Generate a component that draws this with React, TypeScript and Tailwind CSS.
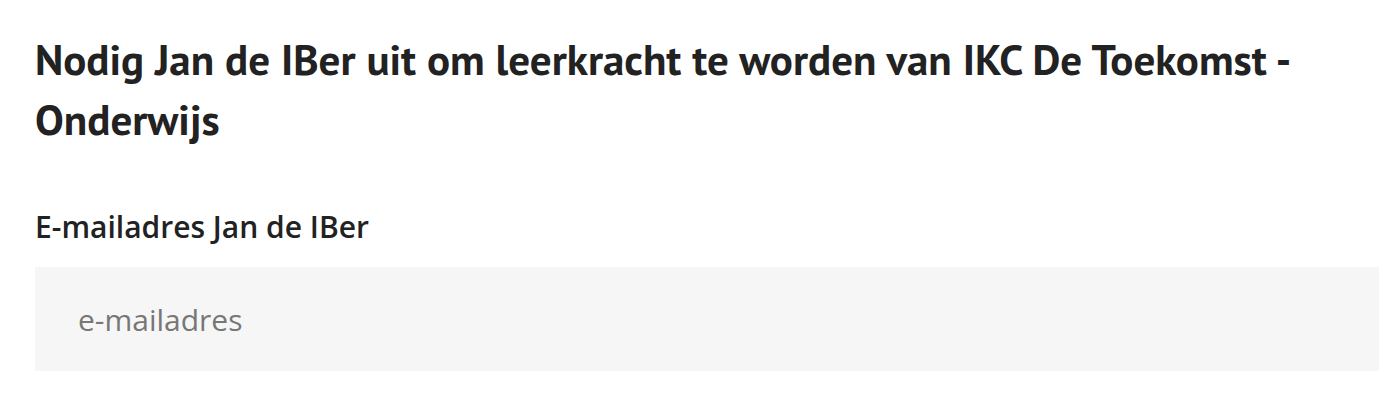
export default function App() {
    return (
        <div className="bg-white min-h-[412px] pl-[35px] pr-[21px] pt-[29px]">
            {/* Title */}
            <h1 className="text-[43px] leading-[60px] font-bold text-[#222] font-['PT_Sans','DejaVu_Sans_Condensed',sans-serif]">
                Nodig Jan de IBer uit om leerkracht te worden van IKC De Toekomst - Onderwijs
            </h1>

            {/* Email field */}
            <div className="mt-[58px]">
                <label className="block text-[30px] leading-[40px] font-semibold text-[#222] font-['Open_Sans',sans-serif]">
                    E-mailadres Jan de IBer
                </label>
                <input
                    type="email"
                    placeholder="e-mailadres"
                    className="mt-[20px] block w-full h-[104px] bg-[#f6f6f6] px-[43px] text-[30px] text-[#222] placeholder:text-[#777] font-['Open_Sans',sans-serif] outline-none"
                />
            </div>
        </div>
    )
}
